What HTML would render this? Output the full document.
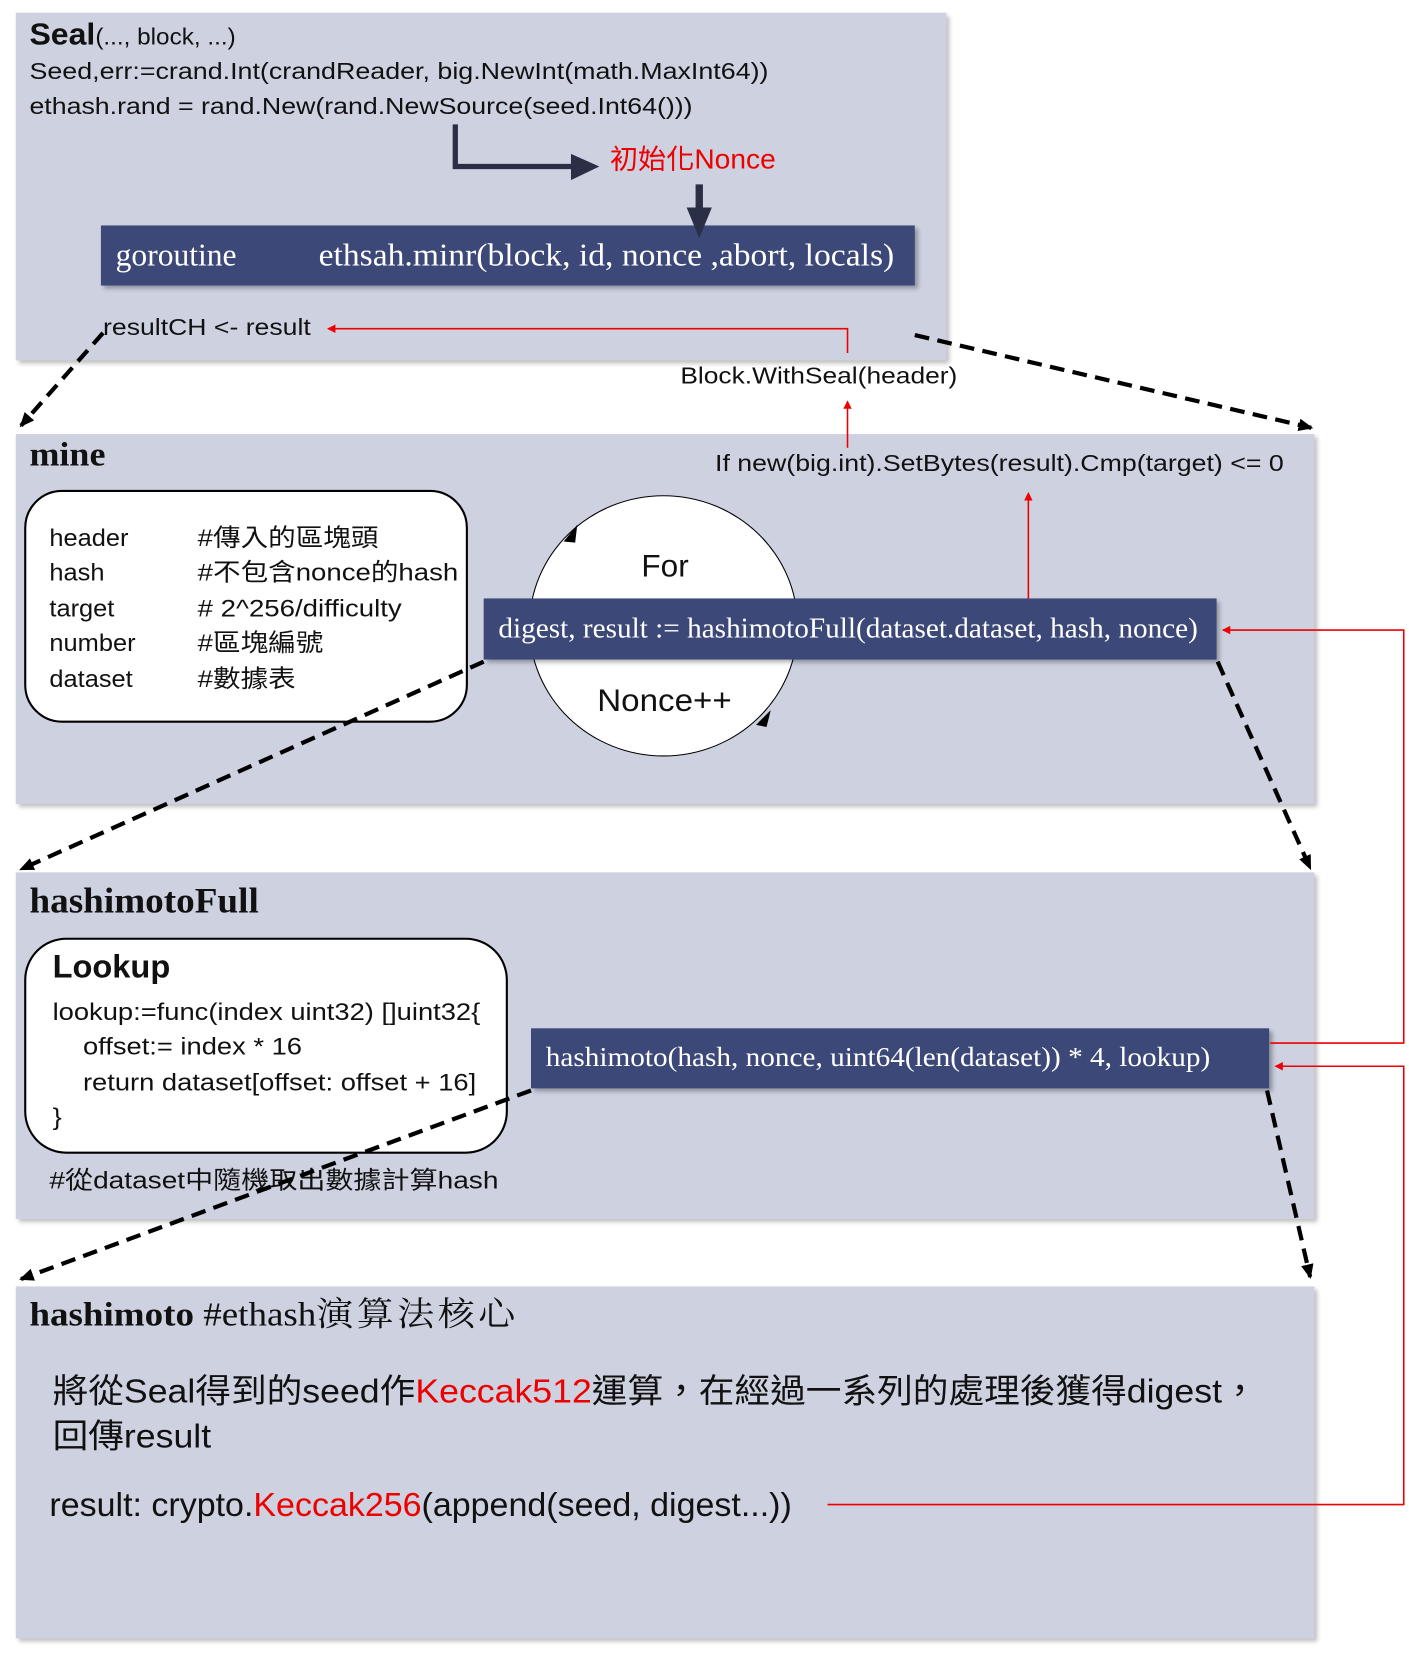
<!DOCTYPE html>
<html><head><meta charset="utf-8"><style>
html,body{margin:0;padding:0;background:#fff;width:1409px;height:1652px;overflow:hidden}
#w{position:absolute;left:0;top:0;width:1340px;height:1570px;transform-origin:0 0;transform:scale(1.0515,1.0536);font-family:"Liberation Sans","Noto Sans CJK TC",sans-serif;color:#111}
.p{position:absolute;background:#cdd1e0;box-shadow:3px 3px 4px rgba(0,0,0,.25)}
.t{position:absolute;white-space:nowrap;line-height:1;transform-origin:0 0}
.bar{position:absolute;background:#3b4878;box-shadow:3px 3px 4px rgba(0,0,0,.3);color:#fff;font-family:"Liberation Serif","Noto Serif CJK SC",serif}
.box{position:absolute;background:#fff;border:2px solid #000}
.s{font-family:"Liberation Serif","Noto Serif CJK SC",serif}
.r{color:#e00}
svg{position:absolute;left:0;top:0}
</style></head><body><div id="w">
<div class="p" style="left:15px;top:12px;width:885px;height:330px"></div>
<div class="p" style="left:15px;top:412px;width:1235px;height:351px"></div>
<div class="p" style="left:15px;top:828px;width:1235px;height:329px"></div>
<div class="p" style="left:15px;top:1221px;width:1235px;height:334px"></div>

<div class="t" style="left:28px;top:19px;font-size:22px;transform:scaleX(1.05)"><b style="font-size:29px">Seal</b>(..., block, ...)</div>
<div class="t" style="left:28px;top:57px;font-size:22px;transform:scaleX(1.16)">Seed,err:=crand.Int(crandReader, big.NewInt(math.MaxInt64))</div>
<div class="t" style="left:28px;top:90px;font-size:22px;transform:scaleX(1.155)">ethash.rand = rand.New(rand.NewSource(seed.Int64()))</div>
<div class="t r" style="left:580px;top:138px;font-size:26px;transform:scaleX(1.03)">初始化Nonce</div>
<div class="bar" style="left:96px;top:214px;width:774px;height:57px"><span class="t" style="left:14px;top:14px;font-size:30px">goroutine</span><span class="t" style="left:207px;top:14px;font-size:30px;transform:scaleX(1.065)">ethsah.minr(block, id, nonce ,abort, locals)</span></div>
<div class="t" style="left:98px;top:300px;font-size:22px;transform:scaleX(1.15)">resultCH &lt;- result</div>
<div class="t" style="left:647px;top:346px;font-size:22px;transform:scaleX(1.14)">Block.WithSeal(header)</div>

<div class="t s" style="left:28px;top:415px;font-size:32px;font-weight:bold;transform:scaleX(1.07)">mine</div>
<div class="t" style="left:680px;top:429px;font-size:22px;transform:scaleX(1.155)">If new(big.int).SetBytes(result).Cmp(target) &lt;= 0</div>
<div class="box" style="left:23px;top:465px;width:418px;height:217px;border-radius:36px"></div>
<div class="t" style="left:47px;top:494px;font-size:23px;line-height:33.4px;transform:scaleX(1.05)">header<br>hash<br>target<br>number<br>dataset</div>
<div class="t" style="left:188px;top:494px;font-size:23px;line-height:33.4px;transform:scaleX(1.14)">#傳入的區塊頭<br>#不包含nonce的hash<br># 2^256/difficulty<br>#區塊編號<br>#數據表</div>
<div style="position:absolute;left:503px;top:470px;width:254px;height:246px;border:1.5px solid #000;border-radius:50%;background:#fff"></div>
<div class="t" style="left:610px;top:523px;font-size:30px">For</div>
<div class="t" style="left:568px;top:651px;font-size:30px;transform:scaleX(1.05)">Nonce++</div>
<div class="bar" style="left:460px;top:568px;width:697px;height:58px"><span class="t" style="left:14px;top:15px;font-size:27px;transform:scaleX(1.03)">digest, result := hashimotoFull(dataset.dataset, hash, nonce)</span></div>

<div class="t s" style="left:28px;top:839px;font-size:34px;font-weight:bold;transform:scaleX(1.04)">hashimotoFull</div>
<div class="box" style="left:23px;top:890px;width:456px;height:201px;border-radius:40px"></div>
<div class="t" style="left:50px;top:902px;font-size:31px;font-weight:bold">Lookup</div>
<div class="t" style="left:50px;top:944px;font-size:23px;line-height:33.3px;transform:scaleX(1.13)">lookup:=func(index uint32) []uint32{<br>&nbsp;&nbsp;&nbsp;&nbsp;offset:= index * 16<br>&nbsp;&nbsp;&nbsp;&nbsp;return dataset[offset: offset + 16]<br>}</div>
<div class="t" style="left:47px;top:1109px;font-size:23px;transform:scaleX(1.16)">#從dataset中隨機取出數據計算hash</div>
<div class="bar" style="left:505px;top:976px;width:702px;height:57px"><span class="t" style="left:14px;top:15px;font-size:26px;transform:scaleX(1.07)">hashimoto(hash, nonce, uint64(len(dataset)) * 4, lookup)</span></div>

<div class="t s" style="left:28px;top:1231px;font-size:32px;transform:scaleX(1.1)"><b>hashimoto</b> #ethash<span style="letter-spacing:3px">演算法核心</span></div>
<div class="t" style="left:50px;top:1299px;font-size:32px;line-height:43px;transform:scaleX(1.06)">將從Seal得到的seed作<span class="r">Keccak512</span>運算，在經過一系列的處理後獲得digest，<br>回傳result</div>
<div class="t" style="left:47px;top:1412px;font-size:32px;transform:scaleX(1.01)">result: crypto.<span class="r">Keccak256</span>(append(seed, digest...))</div>

<svg width="1340" height="1570" viewBox="0 0 1340 1570">
<defs>
<marker id="ar" markerWidth="8" markerHeight="8" refX="7" refY="4" orient="auto" markerUnits="userSpaceOnUse"><path d="M0,0L8,4L0,8z" fill="#e00"/></marker>
<marker id="ab" markerWidth="14" markerHeight="12" refX="12" refY="6" orient="auto" markerUnits="userSpaceOnUse"><path d="M0,0L14,6L0,12z" fill="#000"/></marker>
</defs>
<path d="M433,118V158H545" fill="none" stroke="#2a2f45" stroke-width="5"/>
<path d="M543,146L570,158L543,171z" fill="#2a2f45"/>
<path d="M665,175V200" stroke="#2a2f45" stroke-width="7"/>
<path d="M653,197H677L665,226z" fill="#2a2f45"/>
<path d="M806,335V312H312" fill="none" stroke="#e00" stroke-width="1.5" marker-end="url(#ar)"/>
<path d="M806,425V381" stroke="#e00" stroke-width="1.5" marker-end="url(#ar)"/>
<path d="M978,568V468" stroke="#e00" stroke-width="1.5" marker-end="url(#ar)"/>
<path d="M1208,990H1335V598H1163" fill="none" stroke="#e00" stroke-width="1.5" marker-end="url(#ar)"/>
<path d="M787,1428H1335V1012H1213" fill="none" stroke="#e00" stroke-width="1.5" marker-end="url(#ar)"/>
<g fill="none" stroke="#000" stroke-width="4" stroke-dasharray="14,8">
<path d="M98,316L20,404" marker-end="url(#ab)"/>
<path d="M870,318L1247,406" marker-end="url(#ab)"/>
<path d="M460,628L20,825" marker-end="url(#ab)"/>
<path d="M1158,628L1246,824" marker-end="url(#ab)"/>
<path d="M505,1035L20,1214" marker-end="url(#ab)"/>
<path d="M1205,1035L1246,1212" marker-end="url(#ab)"/>
</g>
<path d="M536,514L549,498L547,515z" fill="#000"/>
<path d="M719,688L733,674L729,690z" fill="#000"/>
</svg>
</div></body></html>
